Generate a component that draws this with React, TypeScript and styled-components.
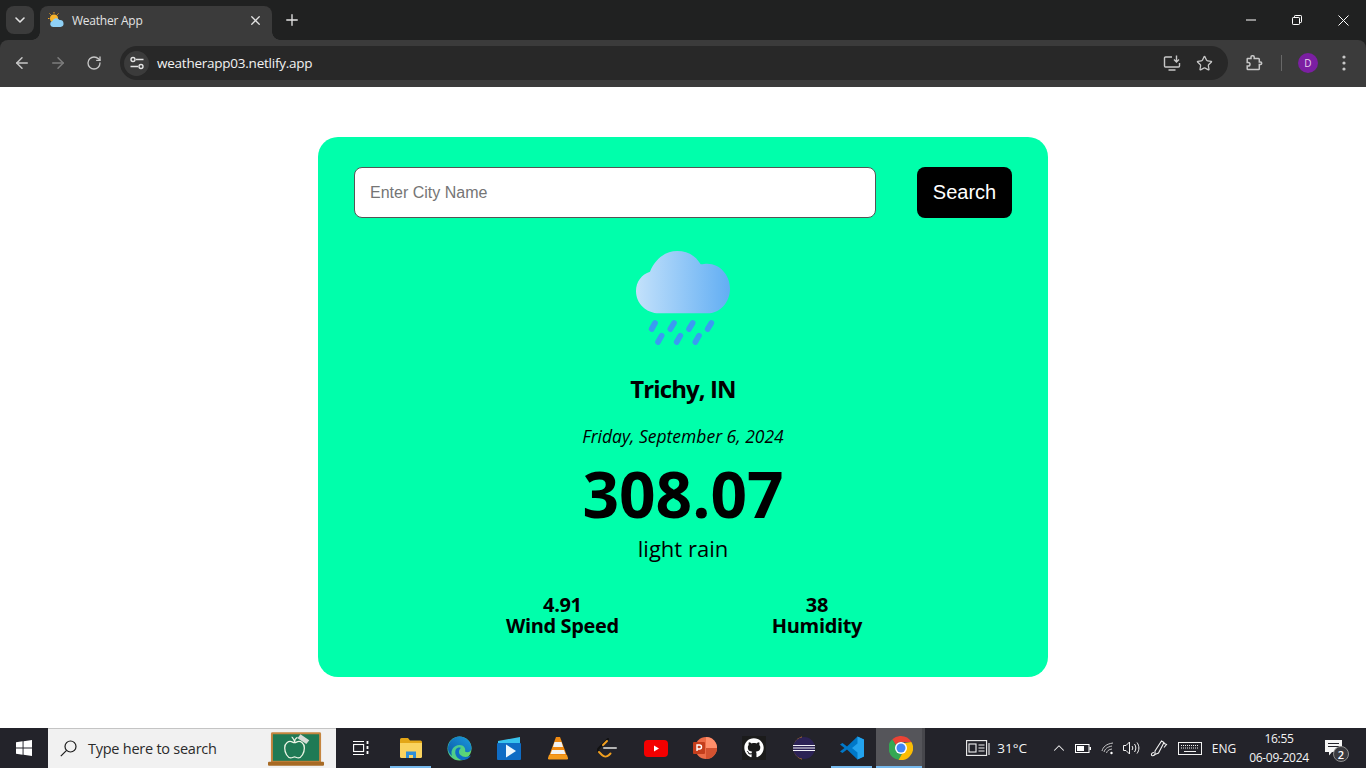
import React from 'react';
import styled, {createGlobalStyle} from 'styled-components';
import {ArrowLeft, ArrowRight, ChevronDown, ChevronUp, Plus, RotateCw, Star, X} from 'lucide-react';
import {FaGithub} from 'react-icons/fa';

const UI_FONT = '"Open Sans", "Noto Sans", sans-serif';

const GlobalStyle = createGlobalStyle`
  * {
    box-sizing: border-box;
  }

  html, body {
    margin: 0;
    padding: 0;
    height: 768px;
    overflow: hidden;
    background: #fff;
  }
`;

const Screen = styled.div`
  width: 1366px;
  height: 768px;
  display: flex;
  flex-direction: column;
  font-family: ${UI_FONT};
`;

/* browser frame */

const Frame = styled.header`
  flex-shrink: 0;
  height: 87px;
  background: #202121;
  display: flex;
  flex-direction: column;
`;

const TabStrip = styled.div`
  height: 40px;
  display: flex;
  align-items: flex-end;
  padding-left: 6px;
`;

const TabList = styled.button`
  width: 28px;
  height: 28px;
  margin-bottom: 6px;
  border: 0;
  padding: 0;
  border-radius: 8px;
  background: #3b3b3b;
  color: #e3e3e3;
  display: flex;
  align-items: center;
  justify-content: center;
`;

const Tab = styled.div`
  position: relative;
  width: 232px;
  height: 34px;
  margin-left: 6px;
  padding: 0 8px 6px;
  background: #3b3b3b;
  border-radius: 8px 8px 0 0;
  display: flex;
  align-items: center;

  &::before, &::after {
    content: '';
    position: absolute;
    bottom: 0;
    width: 8px;
    height: 8px;
    background: radial-gradient(circle at var(--cx) 0, #202121 7.5px, #3b3b3b 8px);
  }

  &::before {
    --cx: 0;
    left: -8px;
  }

  &::after {
    --cx: 100%;
    right: -8px;
  }
`;

const TabTitle = styled.span`
  flex: 1;
  margin-left: 8px;
  font-size: 12px;
  letter-spacing: -0.24px;
  color: #e3e3e3;
  white-space: nowrap;
`;

const TabClose = styled.span`
  display: flex;
  color: #e3e3e3;
  margin-right: 1px;
`;

const NewTab = styled.span`
  display: flex;
  margin: 0 0 11px 11px;
  color: #e3e3e3;
`;

const WindowControls = styled.div`
  margin-left: auto;
  align-self: stretch;
  display: flex;
`;

const WindowControl = styled.span`
  width: 46px;
  height: 40px;
  display: flex;
  align-items: center;
  justify-content: center;
  color: #fff;
`;

const Toolbar = styled.div`
  height: 47px;
  padding: 0 0 1px 4px;
  background: #3b3b3b;
  border-radius: 8px 8px 0 0;
  display: flex;
  align-items: center;
`;

const NavButton = styled.span<{$dim?: boolean; $gap?: number}>`
  flex-shrink: 0;
  width: 36px;
  height: 32px;
  margin-left: ${p => p.$gap ?? 0}px;
  display: flex;
  align-items: center;
  justify-content: center;
  color: ${p => (p.$dim ? '#7d7d7d' : '#c7c7c7')};
`;

const AddressBar = styled.div`
  flex-shrink: 0;
  width: 1108px;
  height: 34px;
  margin-left: 8px;
  padding: 0 8px 0 4px;
  border-radius: 17px;
  background: #282828;
  display: flex;
  align-items: center;
`;

const SiteInfo = styled.span`
  width: 25px;
  height: 25px;
  border-radius: 50%;
  background: #3b3b3b;
  display: flex;
  align-items: center;
  justify-content: center;
`;

const Url = styled.span`
  flex: 1;
  margin-left: 8px;
  font-size: 13.5px;
  letter-spacing: -0.24px;
  color: #f2f2f2;
`;

const AddressAction = styled.span`
  width: 32px;
  display: flex;
  justify-content: center;
  color: #c7c7c7;
`;

const ToolbarEnd = styled.div`
  flex: 1;
  display: flex;
  align-items: center;
  color: #c7c7c7;
`;

const Divider = styled.span`
  width: 1px;
  height: 16px;
  margin: 0 16px 0 9px;
  background: #686868;
`;

const Avatar = styled.span`
  width: 20px;
  height: 20px;
  border-radius: 50%;
  background: #7b1fa2;
  color: #e8d5ee;
  font-size: 10px;
  display: flex;
  align-items: center;
  justify-content: center;
`;

/* the weather app */

const Page = styled.main`
  flex: 1;
  background: #fff;
  display: flex;
  justify-content: center;
  align-items: flex-start;
  padding-top: 50px;
`;

const Card = styled.section`
  width: 730px;
  height: 540px;
  padding: 30px 36px;
  border-radius: 20px;
  background: #00ffab;
  color: #000;
  display: flex;
  flex-direction: column;
  align-items: center;
`;

const SearchRow = styled.form`
  align-self: stretch;
  display: flex;
  justify-content: space-between;
`;

const CityInput = styled.input`
  width: 522px;
  height: 51px;
  padding: 0 15px;
  border: 1px solid #555;
  border-radius: 8px;
  background: #fff;
  outline: none;
  font-family: "Liberation Sans", sans-serif;
  font-size: 16px;

  &::placeholder {
    color: #757575;
  }
`;

const SearchButton = styled.button`
  width: 95px;
  height: 51px;
  border: 0;
  border-radius: 8px;
  background: #000;
  color: #fff;
  font-family: "Liberation Sans", sans-serif;
  font-size: 20px;
`;

const WeatherIcon = styled.svg`
  display: block;
  margin-top: 22px;
`;

const City = styled.h2`
  margin: 18px 0 0;
  font-size: 24px;
  line-height: 32px;
  font-weight: 700;
  letter-spacing: -0.9px;
`;

const DateLine = styled.p`
  margin: 19px 0 0;
  font-size: 17.5px;
  line-height: 24px;
  font-style: italic;
`;

const Temperature = styled.div`
  margin-top: 8px;
  font-size: 64px;
  line-height: 76px;
  font-weight: 700;
`;

const Condition = styled.p`
  margin: 1px 0 0;
  font-size: 22px;
  line-height: 30px;
`;

const Stats = styled.div`
  margin-top: 31px;
  padding-left: 2px;
  display: flex;
  gap: 153px;
`;

const Stat = styled.div`
  text-align: center;
  font-size: 20px;
  line-height: 21px;
  font-weight: 700;
  letter-spacing: -0.35px;
`;

/* windows taskbar */

const Taskbar = styled.footer`
  flex-shrink: 0;
  height: 40px;
  background: #23232a;
  display: flex;
  align-items: stretch;
  color: #fff;
`;

const StartButton = styled.span`
  flex-shrink: 0;
  width: 48px;
  display: flex;
  align-items: center;
  justify-content: center;
`;

const SearchBox = styled.div`
  flex-shrink: 0;
  width: 288px;
  border-top: 1px solid #c4c4c4;
  background: #f1f1f1;
  display: flex;
  align-items: center;
  padding-left: 12px;
`;

const SearchText = styled.span`
  margin-left: 11px;
  flex: 1;
  font-size: 14.5px;
  letter-spacing: -0.25px;
  color: #2b2b2b;
`;

const Chalkboard = styled.svg`
  margin-right: 11px;
`;

const TaskButton = styled.span<{$width?: number; $open?: boolean; $active?: boolean}>`
  flex-shrink: 0;
  position: relative;
  width: ${p => p.$width ?? 49}px;
  display: flex;
  align-items: center;
  justify-content: center;
  background: ${p => (p.$active ? '#55555a' : 'transparent')};
  box-shadow: ${p => (p.$active ? 'inset -3px 0 #47474c' : 'none')};

  &::after {
    content: '';
    display: ${p => (p.$open ? 'block' : 'none')};
    position: absolute;
    left: ${p => (p.$active ? 0 : 4)}px;
    right: ${p => (p.$active ? 3 : 4)}px;
    bottom: 0;
    height: 2px;
    background: #76b9ed;
  }
`;

const Tray = styled.div`
  flex-shrink: 0;
  margin-left: auto;
  display: flex;
  align-items: stretch;
`;

const News = styled.div`
  width: 61px;
  margin-right: 20px;
  display: flex;
  align-items: center;
  justify-content: space-between;
`;

const TrayText = styled.span<{$size?: number}>`
  font-size: ${p => p.$size ?? 13.5}px;
  color: #f4f4f4;
  white-space: nowrap;
`;

const TrayCell = styled.span<{$width: number}>`
  width: ${p => p.$width}px;
  display: flex;
  align-items: center;
  justify-content: center;
`;

const Clock = styled.div`
  width: 72px;
  display: flex;
  flex-direction: column;
  align-items: center;
  justify-content: center;
  font-size: 12px;
  line-height: 19px;
  letter-spacing: -0.3px;
  color: #f4f4f4;
`;

const Badge = styled.span`
  position: absolute;
  right: -6px;
  bottom: 6px;
  width: 16px;
  height: 16px;
  border-radius: 50%;
  border: 1px solid #8f8f8f;
  background: #3a3a3f;
  color: #fff;
  font-size: 11px;
  font-weight: 600;
  display: flex;
  align-items: center;
  justify-content: center;
`;

const NotifyCell = styled.span`
  position: relative;
  width: 18px;
  margin: 0 13px 0 10px;
  display: flex;
  align-items: center;
`;

const ShowDesktop = styled.span`
  width: 10px;
`;

const GithubTile = styled.span`
  width: 24px;
  height: 24px;
  background: #1b1b1b;
  display: flex;
  align-items: center;
  justify-content: center;
  color: #fff;
`;

const Favicon = () => (
  <svg width="16" height="16" viewBox="0 0 16 16">
    <g stroke="#f5a623" strokeWidth="1">
      <path d="M6 0v1.500M1.500 1.500l1.200 1.200M0 6.500h1.500M10.500 1.500L9.300 2.700" />
    </g>
    <circle cx="6" cy="6.500" r="4" fill="#f9b52c" />
    <path d="M5 15a3 3 0 0 1-.6-5.900A4 4 0 0 1 11.500 8a3.500 3.500 0 0 1 1 7z" fill="#8fd0f5" />
  </svg>
);

const TuneIcon = () => (
  <svg width="16" height="16" viewBox="0 0 16 16" fill="none" stroke="#e3e3e3" strokeWidth="1.4">
    <path d="M7 4.5h7.5M1.5 11.5h7.5" />
    <circle cx="4" cy="4.5" r="2" />
    <circle cx="12" cy="11.5" r="2" />
  </svg>
);

const InstallIcon = () => (
  <svg width="18" height="16" viewBox="0 0 18 16" fill="none" stroke="currentColor" strokeWidth="1.4">
    <path d="M9 2H2.5a1 1 0 0 0-1 1v8a1 1 0 0 0 1 1h13a1 1 0 0 0 1-1V8" />
    <path d="M5.5 15h7M13.5 0.5v6M11 4.5l2.5 2.5L16 4.5" />
  </svg>
);

const PuzzleIcon = () => (
  <svg width="18" height="18" viewBox="0 0 18 18" fill="none" stroke="currentColor" strokeWidth="1.5">
    <path d="M2.5 4.5H6V3a1.2 1.2 0 0 1 1.2-1.2H8A1.2 1.2 0 0 1 9.2 3v1.5h4.3a.8.8 0 0 1 .8.8V8h1.2a1 1 0 0 1 0 2.4h-1.2v4.3a.8.8 0 0 1-.8.8H3a.8.8 0 0 1-.8-.8V12h1a1.7 1.7 0 0 0 0-3.6h-1V5a.5.5 0 0 1 .3-.5z" />
  </svg>
);

const Kebab = () => (
  <svg width="4" height="16" viewBox="0 0 4 16" fill="currentColor">
    <circle cx="2" cy="2" r="1.6" />
    <circle cx="2" cy="8" r="1.6" />
    <circle cx="2" cy="14" r="1.6" />
  </svg>
);

const RestoreIcon = () => (
  <svg width="10" height="10" viewBox="0 0 10 10" fill="none" stroke="currentColor">
    <path d="M0.5 3.2a.7.7 0 0 1 .7-.7h5.6a.7.7 0 0 1 .7.7v5.6a.7.7 0 0 1-.7.7H1.2a.7.7 0 0 1-.7-.7z" />
    <path d="M2.5 2.3V1.2a.7.7 0 0 1 .7-.7h5.6a.7.7 0 0 1 .7.7v5.6a.7.7 0 0 1-.7.7H7.7" />
  </svg>
);

const CloseIcon = () => (
  <svg width="11" height="11" viewBox="0 0 11 11" stroke="currentColor">
    <path d="M0.5 0.5l10 10M10.5 0.5l-10 10" />
  </svg>
);

const MinimizeIcon = () => (
  <svg width="10" height="2" viewBox="0 0 10 2" stroke="currentColor">
    <path d="M0 1h10" />
  </svg>
);

const CloudRain = () => (
  <WeatherIcon width="125" height="115" viewBox="3 0 375 345">
    <defs>
      <linearGradient id="cloudFill" x1="0" x2="1" y1="0" y2="0">
        <stop offset="0" stopColor="#c3e1fb" />
        <stop offset="1" stopColor="#62aef3" />
      </linearGradient>
    </defs>
    <path
      d="M118 220C78 220 48 190 48 153C48 125 65 103 90 95C105 58 135 33 172 33C203 33 228 48 242 73C250 72 255 71 262 71C300 71 330 105 330 146C330 187 300 220 262 220Z"
      fill="url(#cloudFill)"
    />
    <g stroke="#3a9bf2" strokeWidth="17" strokeLinecap="round">
      <path d="M105 249L95 267M162 249L151 267M218 249L207 267M274 249L263 267" />
      <path d="M125 287L114 306M181 287L170 306M237 287L226 306" />
    </g>
  </WeatherIcon>
);

const WindowsLogo = () => (
  <svg width="16" height="16" viewBox="0 0 17 17" fill="#fff">
    <path d="M0 2.4L7 1.4V8H0zM8 1.3L17 0V8H8zM0 9h7v6.6L0 14.6zM8 9h9v8l-9-1.3z" />
  </svg>
);

const SearchGlass = () => (
  <svg width="17" height="17" viewBox="0 0 17 17" fill="none" stroke="#1c1c1c" strokeWidth="1.2">
    <circle cx="10.5" cy="6.5" r="5.5" />
    <path d="M6.6 10.4L0.8 16.2" />
  </svg>
);

const BoardArt = () => (
  <Chalkboard width="57" height="36" viewBox="0 0 58 36">
    <rect x="3" y="1" width="51" height="31" rx="1.5" fill="#c5853f" />
    <rect x="5" y="3" width="47" height="27" fill="#1f7a55" />
    <rect x="0" y="31" width="57" height="4" rx="1" fill="#a76a24" />
    <path
      d="M25 11c-4-2-8 1-8 6s3 10 6 10c2 0 3-1 4-1s2 1 4 1c3 0 6-5 6-10s-4-8-8-6c-1 .5-3 .5-4 0z"
      fill="none"
      stroke="#eef5e6"
      strokeWidth="1.3"
    />
    <path d="M27 11c0-3 1-4 3-5M24 6c1 0 2 2 3 4" fill="none" stroke="#eef5e6" strokeWidth="1.2" />
    <path d="M33 3l9 6-3 4-9-6z" fill="#d6dbd6" />
  </Chalkboard>
);

const TaskViewIcon = () => (
  <svg width="16" height="16" viewBox="0 0 16 16" fill="none" stroke="#fff" strokeWidth="1.1">
    <path d="M0 1.5h11M0 14.5h11" />
    <rect x="0.6" y="4.5" width="10" height="7" />
    <path d="M14.5 1v3M14.5 6v3M14.5 11v3" strokeWidth="1.8" />
  </svg>
);

const ExplorerIcon = () => (
  <svg width="22" height="20" viewBox="0 0 22 20">
    <path d="M0 1.5A1.5 1.5 0 0 1 1.5 0H8l2 2.5h10.5A1.5 1.5 0 0 1 22 4v3H0z" fill="#e3a617" />
    <path d="M0 5h22v13.5a1.5 1.5 0 0 1-1.5 1.5h-19A1.5 1.5 0 0 1 0 18.5z" fill="#fad35f" />
    <path d="M6 20v-6.5h10V20h-3v-3H9v3z" fill="#2f8fd8" />
  </svg>
);

const EdgeIcon = () => (
  <svg width="25" height="25" viewBox="0 0 25 25">
    <defs>
      <linearGradient id="edgeA" x1="0" x2="1" y1="0" y2="1">
        <stop offset="0" stopColor="#35c1b1" />
        <stop offset="1" stopColor="#6bdc5f" />
      </linearGradient>
      <linearGradient id="edgeB" x1="0" x2="1" y1="1" y2="0">
        <stop offset="0" stopColor="#0c59a4" />
        <stop offset="1" stopColor="#1a9adf" />
      </linearGradient>
    </defs>
    <circle cx="12.5" cy="12.5" r="12" fill="url(#edgeA)" />
    <path d="M1 11C2 5 7 .5 12.5.5 18 .5 24 4.5 24.5 12c0 4-4 5-6.5 3.500 1-3-1-6.500-5.500-6.500C7 9 3 14 5 20 2.500 18 .5 15 1 11z" fill="url(#edgeB)" />
    <path d="M9 13c-2 4 0 9 5 11 4 .5 8-1 10-4.500-4 2-8 2-10.500-.500C11 17 12 13 14 12c-2-1-4 0-5 1z" fill="#0f6fc6" />
  </svg>
);

const ClipsIcon = () => (
  <svg width="24" height="24" viewBox="0 0 24 24">
    <path d="M1 5l22-4v6H1z" fill="#39c3ee" />
    <rect x="0" y="7" width="24" height="17" rx="1" fill="#0f6cc4" />
    <path d="M9 8.500l10 6.500-10 6.500z" fill="#eef7fd" />
  </svg>
);

const VlcIcon = () => (
  <svg width="20" height="24" viewBox="0 0 20 24">
    <path d="M8 1h4l7 19H1z" fill="#f08a12" />
    <path d="M6.500 6h7l1.500 5H5zM4 14h12l1.500 4h-15z" fill="#f2f2f2" />
    <path d="M1 19h18l1 3a1 1 0 0 1-1 1.500H1A1 1 0 0 1 0 22z" fill="#f59a1c" />
  </svg>
);

const LeetCodeIcon = () => (
  <svg width="20" height="20" viewBox="0 0 20 20" fill="none" strokeWidth="2" strokeLinecap="round">
    <path d="M11 1L2 10c-1.500 1.500-1 3 0 4" stroke="#111" />
    <path d="M2 14l3 3c2 2 5 2 7 0l1.500-1.500" stroke="#f2a01f" />
    <path d="M7 10h12" stroke="#b3b3b3" />
    <path d="M6 7l4-4" stroke="#f2a01f" />
  </svg>
);

const YoutubeIcon = () => (
  <svg width="24" height="17" viewBox="0 0 24 17">
    <rect width="24" height="17" rx="4" fill="#f40000" />
    <path d="M10 5.500l5 3-5 3z" fill="#fff" />
  </svg>
);

const PowerPointIcon = () => (
  <svg width="24" height="24" viewBox="0 0 24 24">
    <circle cx="13" cy="12" r="11" fill="#ed6c47" />
    <path d="M13 1a11 11 0 0 1 11 11H13z" fill="#ff8f6b" />
    <path d="M13 12h11a11 11 0 0 1-11 11z" fill="#d35230" />
    <rect x="0" y="6" width="12" height="12" rx="1" fill="#c43e1c" />
    <path d="M4 15V9h2.500a2 2 0 0 1 0 4H4" fill="none" stroke="#fff" strokeWidth="1.400" />
  </svg>
);

const EclipseIcon = () => (
  <svg width="24" height="24" viewBox="0 0 24 24">
    <path d="M11 0.500a12 12 0 0 0 0 23z" fill="#f7941e" />
    <circle cx="13" cy="12" r="11" fill="#2c2255" />
    <path d="M2 9.500h22M2 12h22M2 14.500h22" stroke="#f3f2f8" strokeWidth="1.200" />
  </svg>
);

const VscodeIcon = () => (
  <svg width="24" height="24" viewBox="0 0 24 24">
    <path d="M17.500 0.500L24 3.500V20.500L17.500 23.500L7 13.500L2.500 17L0 15.500L4.500 12L0 8.500L2.500 7L7 10.500z" fill="#0078c8" />
    <path d="M17.500 0.500L24 3.500V20.500L17.500 23.500V16.500L12 12L17.500 7.500z" fill="#23a3ee" />
  </svg>
);

const ChromeIcon = () => (
  <svg width="24" height="24" viewBox="0 0 24 24">
    <path d="M12 0a12 12 0 0 1 10.400 6H12a6 6 0 0 0-5.200 3L3.300 3.200A12 12 0 0 1 12 0z" fill="#ea4335" />
    <path d="M3.300 3.200L8.500 12a6 6 0 0 0 4.500 5.900L9.600 23.800A12 12 0 0 1 3.300 3.200z" fill="#34a853" />
    <path d="M22.400 6A12 12 0 0 1 9.600 23.800L15 14.500A6 6 0 0 0 15.200 7z" fill="#fbbc04" />
    <circle cx="12" cy="12" r="6" fill="#fff" />
    <circle cx="12" cy="12" r="4.500" fill="#4285f4" />
  </svg>
);

const NewsIcon = () => (
  <svg width="24" height="16" viewBox="0 0 24 16" fill="none" stroke="#f2f2f2" strokeWidth="1.100">
    <rect x="0.600" y="0.600" width="20" height="14.800" />
    <rect x="3" y="4" width="7" height="8" />
    <path d="M12.500 5h6M12.500 8h6M12.500 11h6M23 3v12" />
  </svg>
);

const BatteryIcon = () => (
  <svg width="16" height="9" viewBox="0 0 16 9">
    <rect x="0.500" y="0.500" width="13.500" height="8" fill="none" stroke="#fff" />
    <rect x="2" y="2" width="7" height="5" fill="#fff" />
    <rect x="14.500" y="3" width="1.500" height="3" fill="#fff" />
  </svg>
);

const WifiIcon = () => (
  <svg width="13" height="13" viewBox="0 0 13 13" fill="none" stroke="#d8d8d8" strokeWidth="0.900">
    <path d="M1 9C2 5 5 2 12 1" />
    <path d="M3 10c1-3 3-5 8-6" />
    <path d="M5.500 11c.6-2 2-3.500 5.500-4" />
    <circle cx="10.500" cy="11" r="1.200" fill="#fff" stroke="none" />
  </svg>
);

const VolumeIcon = () => (
  <svg width="17" height="14" viewBox="0 0 17 14" fill="none" stroke="#f2f2f2" strokeWidth="1">
    <path d="M0.500 4.500h2.500L6.500 1v12L3 9.500H0.500z" />
    <path d="M9 5c1 1.200 1 2.800 0 4M11.500 3c1.800 2.500 1.800 5.500 0 8M14 1.500c2.500 3.500 2.500 7.500 0 11" />
  </svg>
);

const PenIcon = () => (
  <svg width="18" height="18" viewBox="0 0 18 18" fill="none" stroke="#f2f2f2" strokeWidth="1.100">
    <path d="M5 12L11.500 2 14 3.500 8.500 14l-3.500 1.500z" />
    <path d="M13 4l3.500 1.500-2.500 3M5 15.500C3 17.500 1 17 1.500 15c.3-1 1.500-1.500 2.500-1.500" />
  </svg>
);

const KeyboardIcon = () => (
  <svg width="24" height="13" viewBox="0 0 24 13" fill="none" stroke="#f2f2f2">
    <rect x="0.500" y="0.500" width="23" height="12" />
    <path d="M3 3.500h18M3 6h18" strokeDasharray="1 1" />
    <path d="M6 9.500h12" />
  </svg>
);

const NotifyIcon = () => (
  <svg width="17" height="16" viewBox="0 0 17 16" fill="#f6f6f6">
    <path d="M0 0h17v12H7l-3 3.500V12H0z" />
    <path d="M3 3.500h11M3 6.500h11" stroke="#23232a" />
  </svg>
);

const apps = [
  {name: 'explorer', icon: <ExplorerIcon />, open: true},
  {name: 'edge', icon: <EdgeIcon />},
  {name: 'clips', icon: <ClipsIcon />},
  {name: 'vlc', icon: <VlcIcon />},
  {name: 'leetcode', icon: <LeetCodeIcon />},
  {name: 'youtube', icon: <YoutubeIcon />},
  {name: 'powerpoint', icon: <PowerPointIcon />},
  {name: 'github', icon: <GithubTile><FaGithub size={20} /></GithubTile>},
  {name: 'eclipse', icon: <EclipseIcon />},
  {name: 'vscode', icon: <VscodeIcon />, open: true},
  {name: 'chrome', icon: <ChromeIcon />, open: true, active: true},
];

const App: React.FC = () => {
  return (
    <Screen>
      <GlobalStyle />
      <Frame>
        <TabStrip>
          <TabList><ChevronDown size={16} strokeWidth={2.4} /></TabList>
          <Tab>
            <Favicon />
            <TabTitle>Weather App</TabTitle>
            <TabClose><X size={15} strokeWidth={2} /></TabClose>
          </Tab>
          <NewTab><Plus size={18} strokeWidth={1.8} /></NewTab>
          <WindowControls>
            <WindowControl><MinimizeIcon /></WindowControl>
            <WindowControl><RestoreIcon /></WindowControl>
            <WindowControl><CloseIcon /></WindowControl>
          </WindowControls>
        </TabStrip>
        <Toolbar>
          <NavButton><ArrowLeft size={18} strokeWidth={2} /></NavButton>
          <NavButton $dim><ArrowRight size={18} strokeWidth={2} /></NavButton>
          <NavButton><RotateCw size={16} strokeWidth={2} /></NavButton>
          <AddressBar>
            <SiteInfo><TuneIcon /></SiteInfo>
            <Url>weatherapp03.netlify.app</Url>
            <AddressAction><InstallIcon /></AddressAction>
            <AddressAction><Star size={17} strokeWidth={1.8} /></AddressAction>
          </AddressBar>
          <ToolbarEnd>
            <NavButton $gap={8}><PuzzleIcon /></NavButton>
            <Divider />
            <Avatar>D</Avatar>
            <NavButton $gap={8}><Kebab /></NavButton>
          </ToolbarEnd>
        </Toolbar>
      </Frame>

      <Page>
        <Card>
          <SearchRow onSubmit={e => e.preventDefault()}>
            <CityInput placeholder="Enter City Name" />
            <SearchButton>Search</SearchButton>
          </SearchRow>
          <CloudRain />
          <City>Trichy, IN</City>
          <DateLine>Friday, September 6, 2024</DateLine>
          <Temperature>308.07</Temperature>
          <Condition>light rain</Condition>
          <Stats>
            <Stat>4.91<br />Wind Speed</Stat>
            <Stat>38<br />Humidity</Stat>
          </Stats>
        </Card>
      </Page>

      <Taskbar>
        <StartButton><WindowsLogo /></StartButton>
        <SearchBox>
          <SearchGlass />
          <SearchText>Type here to search</SearchText>
          <BoardArt />
        </SearchBox>
        <TaskButton $width={50}><TaskViewIcon /></TaskButton>
        {apps.map(app => (
          <TaskButton key={app.name} $open={app.open} $active={app.active}>{app.icon}</TaskButton>
        ))}
        <Tray>
          <News>
            <NewsIcon />
            <TrayText>31°C</TrayText>
          </News>
          <TrayCell $width={24}><ChevronUp size={18} strokeWidth={1.4} color="#f2f2f2" /></TrayCell>
          <TrayCell $width={24}><BatteryIcon /></TrayCell>
          <TrayCell $width={24}><WifiIcon /></TrayCell>
          <TrayCell $width={24}><VolumeIcon /></TrayCell>
          <TrayCell $width={32}><PenIcon /></TrayCell>
          <TrayCell $width={30}><KeyboardIcon /></TrayCell>
          <TrayCell $width={38}><TrayText $size={12}>ENG</TrayText></TrayCell>
          <Clock>
            <span>16:55</span>
            <span>06-09-2024</span>
          </Clock>
          <NotifyCell>
            <NotifyIcon />
            <Badge>2</Badge>
          </NotifyCell>
          <ShowDesktop />
        </Tray>
      </Taskbar>
    </Screen>
  );
};

export default App;
